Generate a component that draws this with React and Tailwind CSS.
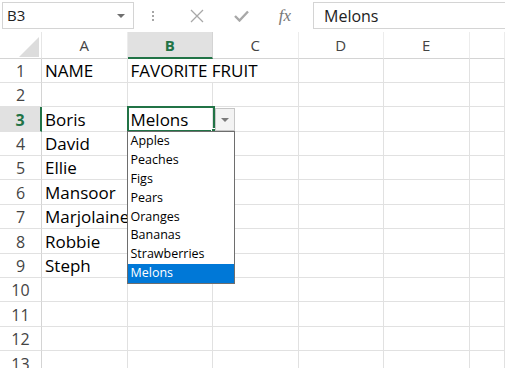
import React from "react";

const COLS = ["A", "B", "C", "D", "E", ""];
const FRUITS = ["Apples", "Peaches", "Figs", "Pears", "Oranges", "Bananas", "Strawberries", "Melons"];
const ROWS = [
  ["NAME", "FAVORITE FRUIT"],
  ["", ""],
  ["Boris", "Melons"],
  ["David", ""],
  ["Ellie", ""],
  ["Mansoor", ""],
  ["Marjolaine", ""],
  ["Robbie", ""],
  ["Steph", ""],
  ["", ""],
  ["", ""],
  ["", ""],
  ["", ""],
];

const font = { fontFamily: '"Open Sans", "Noto Sans", sans-serif' };

function DropdownList() {
  return (
    <>
      {/* the little arrow button next to the active cell */}
      <div className="absolute left-[87px] top-[1px] z-20 w-[20px] h-[23px] bg-[#f3f3f3] border border-[#c6c6c6] flex items-center justify-center">
        <div className="w-0 h-0 border-l-[4px] border-r-[4px] border-t-[4px] border-l-transparent border-r-transparent border-t-[#7a7a7a]" />
      </div>
      <div className="absolute left-[-1px] top-[24px] z-20 w-[108px] bg-white border border-[#6e6e6e] flex flex-col">
        {FRUITS.map((f) => (
          <div
            key={f}
            className={`h-[18.8px] pl-[3px] flex items-center text-[12.5px] leading-none ${
              f === "Melons" ? "bg-[#0078d7] text-white" : "text-black"
            }`}
          >
            {f}
          </div>
        ))}
      </div>
    </>
  );
}

export default function App() {
  return (
    <div className="w-[505px] h-[368px] overflow-hidden bg-white select-none" style={font}>
      {/* Name box + formula bar */}
      <div className="h-[32px] flex items-start pt-[2px]">
        <div className="ml-[2px] w-[132px] h-[27px] border border-[#d4d4d4] flex items-center justify-between pl-[4px] pr-[8px]">
          <span className="text-[15px] text-[#222]">B3</span>
          <div className="w-0 h-0 border-l-[4px] border-r-[4px] border-t-[4px] border-l-transparent border-r-transparent border-t-[#6f6f6f]" />
        </div>
        <div className="w-[38px] h-[27px] flex flex-col items-center justify-center gap-[2px]">
          <div className="w-[2px] h-[2px] bg-[#a6a6a6]" />
          <div className="w-[2px] h-[2px] bg-[#a6a6a6]" />
          <div className="w-[2px] h-[2px] bg-[#a6a6a6]" />
        </div>
        <div className="w-[141px] h-[27px] flex items-center">
          <div className="w-[50px] flex justify-center">
            <svg width="14" height="14" viewBox="0 0 14 14">
              <path d="M1 1 L13 13 M13 1 L1 13" stroke="#a8a8a8" strokeWidth="1.3" fill="none" />
            </svg>
          </div>
          <div className="w-[38px] flex justify-center">
            <svg width="15" height="12" viewBox="0 0 15 12">
              <path d="M1 6 L5.5 10.5 L14 1.5" stroke="#a8a8a8" strokeWidth="2.4" fill="none" />
            </svg>
          </div>
          <div className="w-[50px] flex justify-center">
            <span className="text-[17px] italic text-[#777]" style={{ fontFamily: '"Liberation Serif", serif' }}>
              fx
            </span>
          </div>
        </div>
        <div className="flex-1 h-[27px] border border-r-0 border-[#d4d4d4] flex items-center pl-[10px]">
          <span className="text-[16px] text-[#222]">Melons</span>
        </div>
      </div>

      {/* Sheet grid */}
      <div className="grid grid-cols-[42px_85.5px_85.5px_85.5px_85.5px_85.5px_1fr]">
        {/* header row */}
        <div className="h-[26.5px] border-b border-[#d4d4d4] border-r border-r-[#e6e6e6] flex items-end justify-end pr-[2px] pb-[1px]">
          <div className="w-0 h-0 border-b-[20px] border-l-[20px] border-b-[#dcdcdc] border-l-transparent" />
        </div>
        {COLS.map((c, i) => (
          <div
            key={i}
            className={`h-[26.5px] flex items-center justify-center text-[15px] pt-[1px] ${
              c === "B"
                ? "bg-[#e1e1e1] border-b-2 border-[#217346] text-[#217346] font-bold border-r border-r-[#d4d4d4]"
                : "border-b border-[#d4d4d4] border-r border-r-[#ececec] text-[#444]"
            }`}
          >
            {c}
          </div>
        ))}

        {ROWS.map((r, ri) => {
          const rowNum = ri + 1;
          const active = rowNum === 3;
          return (
            <React.Fragment key={ri}>
              <div
                className={`h-[24.4px] flex items-end justify-center pb-[3px] text-[16px] leading-none border-b border-[#e1e1e1] ${
                  active
                    ? "bg-[#e1e1e1] border-r-2 border-r-[#217346] text-[#217346] font-bold"
                    : "border-r border-r-[#d4d4d4] text-[#444]"
                }`}
              >
                {rowNum}
              </div>
              {COLS.map((c, ci) => {
                const txt = ci < 2 ? r[ci] : "";
                const selected = active && ci === 1;
                // text spilling into the next cell hides that gridline
                const spills = rowNum === 1 && ci === 1;
                return (
                  <div
                    key={ci}
                    className={`relative h-[24.4px] border-b border-[#e1e1e1] flex items-end pl-[3px] pb-[3px] text-[17px] leading-none text-black whitespace-nowrap ${
                      spills ? "" : "border-r border-r-[#e1e1e1]"
                    } ${ci === 0 ? "z-10" : ""} ${selected ? "z-20" : ""}`}
                  >
                    {selected && (
                      <div className="absolute left-[-1px] top-[-1px] w-[88px] h-[26px] border-2 border-[#217346] pointer-events-none">
                        <div className="absolute right-[-3px] bottom-[-3px] w-[5px] h-[5px] bg-[#217346] border border-white" />
                      </div>
                    )}
                    <span className="relative">{txt}</span>
                    {selected && <DropdownList />}
                  </div>
                );
              })}
            </React.Fragment>
          );
        })}
      </div>
    </div>
  );
}
